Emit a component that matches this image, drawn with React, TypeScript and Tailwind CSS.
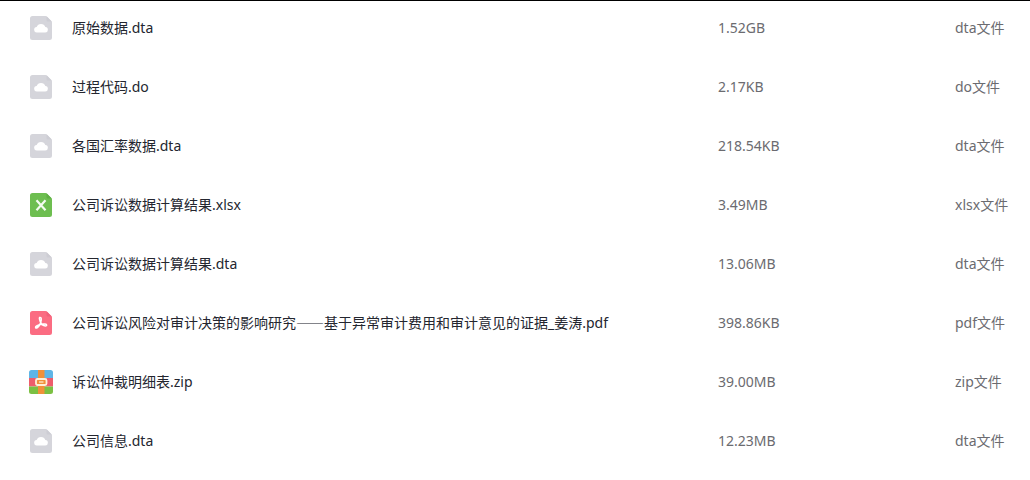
type Kind = "cloud" | "excel" | "pdf" | "zip";

interface FileRow {
  name: string;
  size: string;
  type: string;
  kind: Kind;
}

const files: FileRow[] = [
  { name: "原始数据.dta", size: "1.52GB", type: "dta文件", kind: "cloud" },
  { name: "过程代码.do", size: "2.17KB", type: "do文件", kind: "cloud" },
  { name: "各国汇率数据.dta", size: "218.54KB", type: "dta文件", kind: "cloud" },
  { name: "公司诉讼数据计算结果.xlsx", size: "3.49MB", type: "xlsx文件", kind: "excel" },
  { name: "公司诉讼数据计算结果.dta", size: "13.06MB", type: "dta文件", kind: "cloud" },
  {
    name: "公司诉讼风险对审计决策的影响研究——基于异常审计费用和审计意见的证据_姜涛.pdf",
    size: "398.86KB",
    type: "pdf文件",
    kind: "pdf",
  },
  { name: "诉讼仲裁明细表.zip", size: "39.00MB", type: "zip文件", kind: "zip" },
  { name: "公司信息.dta", size: "12.23MB", type: "dta文件", kind: "cloud" },
];

const PAGE = "M4.5 1h13a2 2 0 0 1 1.400.600l4.500 4.500a2 2 0 0 1 .6 1.400v15a2.500 2.500 0 0 1-2.500 2.500h-17A2.500 2.500 0 0 1 2 22.500v-19A2.500 2.500 0 0 1 4.500 1z";
const FOLD = "M18.500 1.300 23.700 6.500h-3.700a1.500 1.500 0 0 1-1.500-1.500z";

function FileIcon({ kind }: { kind: Kind }) {
  return (
    <svg viewBox="0 0 26 26" className="block size-[26px]" aria-hidden="true">
      {kind === "cloud" && (
        <>
          <path d={PAGE} fill="#d5d5db" />
          <path d={FOLD} fill="#cdcdd4" />
          <path
            d="M9 17.500a2.700 2.700 0 0 1-.3-5.400 4.500 4.500 0 0 1 8.600 0 2.700 2.700 0 0 1-.3 5.400z"
            fill="#fff"
          />
        </>
      )}
      {kind === "excel" && (
        <>
          <path d={PAGE} fill="#6dbe50" />
          <path d={FOLD} fill="#5fae43" />
          <path d="m8.500 8.200 9 10M17.500 8.200l-9 10" fill="none" stroke="#f4fbf1" strokeWidth="2.200" />
        </>
      )}
      {kind === "pdf" && (
        <>
          <path d={PAGE} fill="#fb6c82" />
          <path d={FOLD} fill="#f0607a" />
          <path
            d="M11.500 7.500c2-.5 2.100 2 1.300 4.500-.9 2.800-2.400 5.300-4 6-1.500.4-1.700-1.100-.2-2 2.300-1.500 6-2.300 8.500-2 2 .3 2 2 .3 1.900-2-.1-4.300-2.300-5.200-4.500-.6-1.500-1.100-3.400-.7-3.900z"
            fill="none"
            stroke="#fff"
            strokeWidth="1.500"
            strokeLinejoin="round"
          />
        </>
      )}
      {kind === "zip" && (
        <>
          <path d="M1 9V3.500A2.500 2.500 0 0 1 3.500 1h19A2.500 2.500 0 0 1 25 3.500V9z" fill="#5fb5e6" />
          <path d="M1 9h24v8.500H1z" fill="#ee5d6c" />
          <path d="M1 17.500h24v5a2.500 2.500 0 0 1-2.500 2.500h-19A2.500 2.500 0 0 1 1 22.500z" fill="#7bc043" />
          <path d="M10 1h6.500v24H10z" fill="#f0913a" />
          <rect x="8" y="10" width="10.500" height="6" rx="1.500" fill="#f0913a" stroke="#fff0d8" strokeWidth="1.800" />
          <path d="M11 13h4.500" stroke="#fff0d8" strokeWidth="1.200" />
        </>
      )}
    </svg>
  );
}

/* The double dash takes the Chinese face, where its two halves join into one line. */
function FileName({ name }: { name: string }) {
  const [head, tail] = name.split("——");
  if (tail === undefined) return <>{name}</>;
  return (
    <>
      {head}
      <span lang="zh-CN" className="font-['Noto_Sans_CJK_SC',sans-serif] leading-none">——</span>
      {tail}
    </>
  );
}

export default function App() {
  return (
    <main className="border-t border-black bg-white font-['Noto_Sans','Noto_Sans_CJK_SC',sans-serif] text-sm/5">
      <table className="w-full table-fixed border-collapse text-left">
        <colgroup>
          <col className="w-[72px]" />
          <col />
          <col className="w-[237px]" />
          <col className="w-[75px]" />
        </colgroup>
        <tbody>
          {files.map((file) => (
            <tr key={file.name} className="h-[59px] align-top whitespace-nowrap">
              <td className="pt-3.5 pl-7">
                <FileIcon kind={file.kind} />
              </td>
              <th scope="row" className="pt-[17px] font-normal text-[#24262f]">
                <FileName name={file.name} />
              </th>
              <td className="pt-[17px] text-[#6b6b70]">{file.size}</td>
              <td className="pt-[17px] text-[#6b6b70]">{file.type}</td>
            </tr>
          ))}
        </tbody>
      </table>
    </main>
  );
}
